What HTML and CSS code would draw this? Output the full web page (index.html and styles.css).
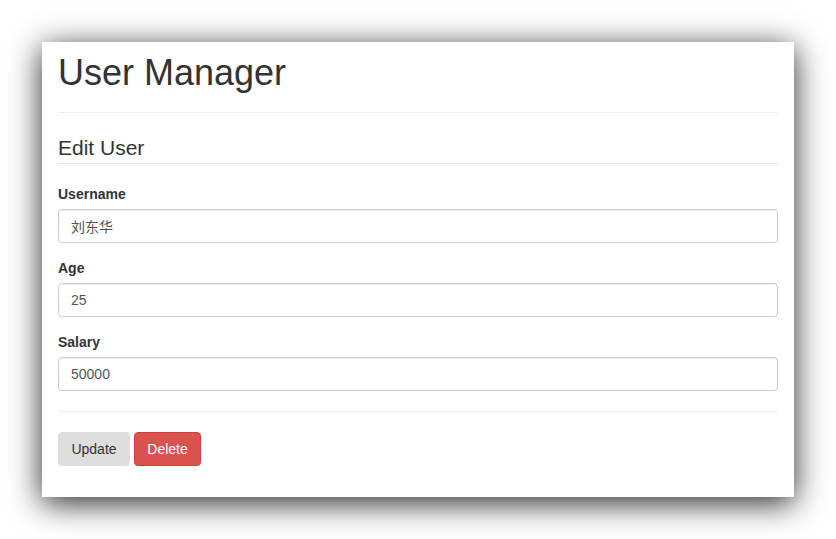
FILE: index.html
```html
<!DOCTYPE html>
<html lang="zh-CN">
<head>
<meta charset="utf-8">
<title>User Manager</title>
<link rel="stylesheet" href="styles.css">
</head>
<body>
<div class="card">
  <div class="page-header">
    <h1>User Manager</h1>
  </div>
  <form class="form">
    <div class="legend">Edit User</div>
    <div class="form-group">
      <label for="username">Username</label>
      <input id="username" class="form-control" type="text" value="刘东华">
    </div>
    <div class="form-group">
      <label for="age">Age</label>
      <input id="age" class="form-control" type="text" value="25">
    </div>
    <div class="form-group">
      <label for="salary">Salary</label>
      <input id="salary" class="form-control" type="text" value="50000">
    </div>
    <hr class="divider">
    <div class="actions">
      <button type="button" class="btn btn-default">Update</button>
      <button type="button" class="btn btn-danger">Delete</button>
    </div>
  </form>
</div>
</body>
</html>
```

FILE: styles.css
```css
* { box-sizing: border-box; }
html, body { margin: 0; padding: 0; background: #fff; }
body {
  font-family: "Liberation Sans", Arial, "Noto Sans CJK SC", sans-serif;
  font-size: 14px;
  line-height: 20px;
  color: #333;
  padding: 42px 0;
  min-height: 539px;
}
.card {
  width: 752px;
  margin: 0 auto;
  background: #fff;
  padding: 11px 16px 31px;
  box-shadow: 0 6px 30px rgba(0, 0, 0, 0.85);
}
.form { margin: 0; }
.page-header {
  padding-bottom: 19px;
  border-bottom: 1px solid #eee;
}
.page-header h1 {
  margin: 0;
  font-size: 36px;
  font-weight: 500;
  line-height: 40px;
  color: #333;
}
.legend {
  margin: 20px 0;
  font-size: 21px;
  line-height: 30px;
  color: #333;
  border-bottom: 1px solid #e5e5e5;
}
.form-group { margin-bottom: 15px; }
label {
  display: block;
  margin-bottom: 5px;
  font-weight: bold;
  line-height: 20px;
}
.form-control {
  display: block;
  width: 100%;
  height: 34px;
  padding: 6px 12px;
  font-family: "Liberation Sans", Arial, "Noto Sans CJK SC", sans-serif;
  font-size: 14px;
  line-height: 20px;
  color: #555;
  background: #fff;
  border: 1px solid #ccc;
  border-radius: 4px;
  box-shadow: inset 0 1px 1px rgba(0, 0, 0, 0.075);
  outline: none;
}
.divider {
  margin: 20px 0;
  border: 0;
  border-top: 1px solid #eee;
  height: 0;
}
.actions { display: flex; gap: 4px; }
.btn {
  height: 34px;
  padding: 6px 12px;
  font-family: "Liberation Sans", Arial, sans-serif;
  font-size: 14px;
  line-height: 20px;
  border: 1px solid transparent;
  border-radius: 4px;
  cursor: pointer;
}
.btn-default {
  min-width: 72px;
  color: #333;
  background: #dedede;
  border-color: #dedede;
}
.btn-danger {
  min-width: 67px;
  color: #fff;
  background: #d9534f;
  border-color: #d43f3a;
}
```
